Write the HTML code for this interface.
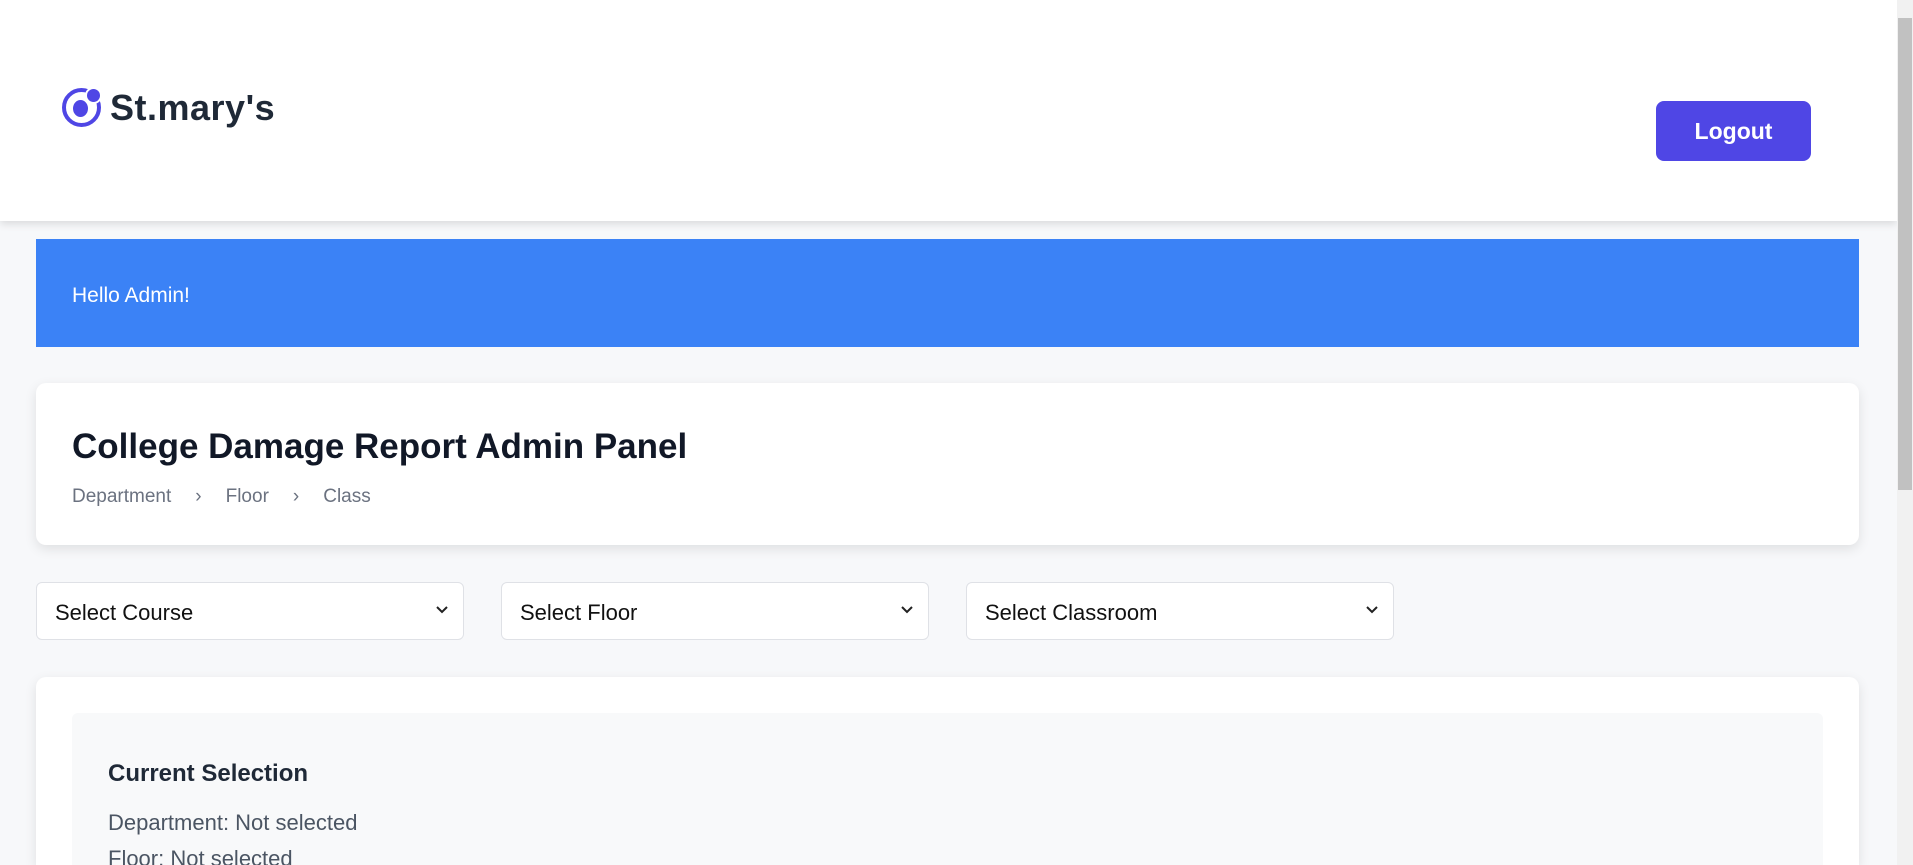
<!DOCTYPE html>
<html><head><meta charset="utf-8"><style>
*{box-sizing:border-box;margin:0;padding:0}
html,body{width:1913px;height:865px;overflow:hidden}
body{background:#f7f8fa;font-family:"Liberation Sans",sans-serif;position:relative}
.hdr{position:absolute;left:0;top:0;width:1897px;height:221px;background:#fff;box-shadow:0 3px 8px rgba(0,0,0,.12)}
.logo{position:absolute;left:62px;top:88px;width:39px;height:39px;border:4px solid #4f46e5;border-radius:50%}
.logo:before{content:"";position:absolute;left:7px;top:8px;width:15px;height:17px;border-radius:50%;background:#4f46e5}
.logo:after{content:"";position:absolute;right:-5px;top:-5px;width:13px;height:13px;border-radius:50%;background:#4f46e5;border:2px solid #fff}
.brand{position:absolute;left:110px;top:87px;font-size:36px;font-weight:bold;color:#1f2937;letter-spacing:0.5px}
.btn{position:absolute;left:1656px;top:101px;width:155px;height:60px;background:#4f46e5;border-radius:8px;color:#fff;font-weight:bold;font-size:23px;text-align:center;line-height:60px}
.sb{position:absolute;left:1897px;top:0;width:16px;height:865px;background:#f1f1f1}
.sb div{position:absolute;left:1px;top:18px;width:14px;height:472px;background:#c1c1c1}
.banner{position:absolute;left:36px;top:239px;width:1823px;height:108px;background:#3b82f6;color:#fff;font-size:21px;padding:45px 0 0 36px}
.card{position:absolute;left:36px;background:#fff;border-radius:10px;box-shadow:0 4px 12px rgba(0,0,0,.1);width:1823px}
h1{position:absolute;left:36px;top:44px;font-size:35px;color:#111827;font-weight:bold}
.bc{position:absolute;left:36px;top:103px;font-size:19px;color:#6b7280}
.bc span{margin:0 24px;}
.sel{position:absolute;top:582px;width:428px;height:58px;background:#fff;border:1px solid #dfe1e6;border-radius:6px;font-size:22px;color:#111;padding:17px 0 0 18px}
.sel svg{position:absolute;right:14px;top:22px}
.inner{position:absolute;left:36px;top:36px;width:1751px;height:160px;background:#f8f9fa;border-radius:6px}
.inner h3{position:absolute;left:36px;top:47px;font-size:24px;color:#1f2937}
.inner p{position:absolute;left:36px;font-size:22px;color:#4b5563}
</style></head><body>
<div class="hdr"><div class="logo"></div><div class="brand">St.mary's</div><div class="btn">Logout</div></div>
<div class="sb"><div></div></div>
<div class="banner">Hello Admin!</div>
<div class="card" style="top:383px;height:162px"><h1>College Damage Report Admin Panel</h1>
<div class="bc">Department<span>›</span>Floor<span>›</span>Class</div></div>
<div class="sel" style="left:36px">Select Course<svg width="14" height="10" viewBox="0 0 14 10"><path d="M2 2l5 5 5-5" fill="none" stroke="#222" stroke-width="2"/></svg></div>
<div class="sel" style="left:501px">Select Floor<svg width="14" height="10" viewBox="0 0 14 10"><path d="M2 2l5 5 5-5" fill="none" stroke="#222" stroke-width="2"/></svg></div>
<div class="sel" style="left:966px">Select Classroom<svg width="14" height="10" viewBox="0 0 14 10"><path d="M2 2l5 5 5-5" fill="none" stroke="#222" stroke-width="2"/></svg></div>
<div class="card" style="top:677px;height:188px;border-radius:10px 10px 0 0"><div class="inner">
<h3>Current Selection</h3>
<p style="top:97px">Department: Not selected</p>
<p style="top:133px">Floor: Not selected</p>
</div></div>
</body></html>
